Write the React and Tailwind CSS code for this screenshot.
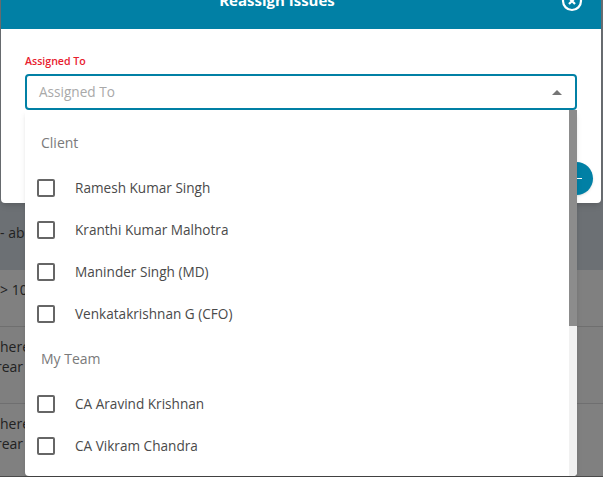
const clientNames = ['Ramesh Kumar Singh', 'Kranthi Kumar Malhotra', 'Maninder Singh (MD)', 'Venkatakrishnan G (CFO)'];
const teamNames = ['CA Aravind Krishnan', 'CA Vikram Chandra'];

const OptionRow = ({ name }) => (
  <div className="flex h-[42px] items-center pl-[12px]">
    <span className="h-[18px] w-[18px] rounded-[2px] border-2 border-[#666666]" />
    <span className="ml-[20px] text-[13.6px] text-[#4a4a4a]">{name}</span>
  </div>
);

const GroupLabel = ({ className, children }) => (
  <div className={`flex items-center pl-[16px] text-[14px] text-[#7a7a7a] ${className}`}>{children}</div>
);

// dimmed table rows behind the dialog
const BackgroundPage = () => (
  <div className="flex h-[476px] flex-col bg-[#6c7074] text-[14px] text-[#222222]">
    <div className="h-[203px]" />
    <div className="flex h-[67px] items-start pt-[19px]">- ab</div>
    <div className="flex h-[56px] items-start bg-[#808080] pt-[9px]">&gt; 10</div>
    <div className="h-[77px] border-t border-[#6f6f6f] bg-[#7f7f7f] pt-[10px] leading-[20px]">
      <div>here</div>
      <div className="-ml-[4px]">rear -</div>
    </div>
    <div className="flex-1 border-t border-[#6f6f70] bg-[#808080] pt-[10px] leading-[20px]">
      <div>here</div>
      <div className="-ml-[4px]">rear -</div>
    </div>
  </div>
);

export default function App() {
  return (
    <div className="relative h-[477px] w-[603px] overflow-hidden bg-[#4a4a4a] font-['Open_Sans',sans-serif]">
      <BackgroundPage />

      <div className="absolute left-[1px] top-[-20px] h-[223px] w-[600px] overflow-hidden rounded-[4px] bg-white shadow-md">
        <div className="relative flex h-[49px] items-start justify-center bg-[#0180a5] pr-[48px] pt-[9px] text-[15px] font-bold text-white">
          Reassign Issues
          <svg className="absolute right-[18px] top-[10px]" width="22" height="22" viewBox="0 0 22 22" fill="none" stroke="white" strokeWidth="2.2">
            <circle cx="11" cy="11" r="9" />
            <path d="M8 8l6 6M14 8l-6 6" />
          </svg>
        </div>
        <div className="px-[24px] pt-[24px]">
          <div className="text-[10.6px] font-semibold leading-[16px] text-[#e8202e]">Assigned To</div>
          <div className="mt-[5px] flex h-[36px] w-[552px] items-center justify-between rounded-[4px] border-2 border-[#0180a5] pl-[12px] pr-[13px] text-[13.6px] text-[#a9a9a9]">
            <span className="pt-[1px]">Assigned To</span>
            <span className="h-0 w-0 border-x-[5px] border-b-[5px] border-x-transparent border-b-[#757575]" />
          </div>
        </div>
        <div className="absolute right-[8px] top-[182px] flex h-[33px] w-[33px] items-center justify-center rounded-full bg-[#0180a5] shadow-sm">
          <span className="h-[1px] w-[10px] bg-white" />
        </div>
      </div>

      <div className="absolute left-[25px] top-[110px] flex h-[366px] w-[552px] overflow-hidden rounded-b-[4px] bg-white shadow-md">
        <div className="flex-1 pt-[8px]">
          <GroupLabel className="h-[49px]">Client</GroupLabel>
          {clientNames.map((name) => <OptionRow key={name} name={name} />)}
          <GroupLabel className="mb-[2px] h-[46px]">My Team</GroupLabel>
          {teamNames.map((name) => <OptionRow key={name} name={name} />)}
        </div>
        <div className="w-[8px] bg-[#f1f1f1]">
          <div className="h-[216px] bg-[#8c8c8c]" />
        </div>
      </div>
    </div>
  );
}
